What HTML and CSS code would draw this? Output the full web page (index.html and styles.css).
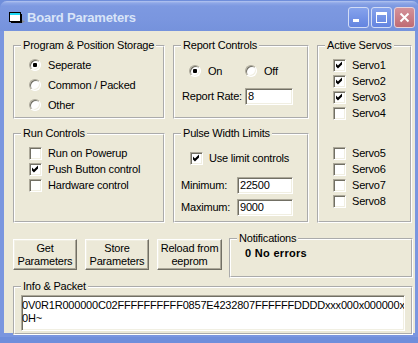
FILE: index.html
```html
<!DOCTYPE html>
<html lang="en">
<head>
  <title>Board Parameters</title>
  <meta charset="UTF-8">
  <meta name="viewport" content="width=device-width, initial-scale=1">
  <link rel="stylesheet" href="styles.css">
</head>
<body>
  <div class="window">
    <div class="titlebar">
      <svg class="app-icon" width="16" height="12" viewBox="0 0 16 12">
        <rect x="2" y="2" width="11" height="9" fill="#000"/>
        <rect x="0.5" y="0.5" width="11" height="9" fill="#fff" stroke="#000"/>
        <rect x="1" y="1" width="10" height="2" fill="#1ed8f5"/>
        <path d="M13 8 L16 9.5 L13 11 Z" fill="#8a8a8a"/>
      </svg>
      <span class="title">Board Parameters</span>
      <div class="caption-buttons">
        <span class="cap-btn"><span class="min-glyph"></span></span>
        <span class="cap-btn"><span class="max-glyph"></span></span>
        <span class="cap-btn cap-close">
          <svg width="11" height="11" viewBox="0 0 11 11">
            <path d="M1.5 1.5 L9.5 9.5 M9.5 1.5 L1.5 9.5" stroke="#fff" stroke-width="2"/>
          </svg>
        </span>
      </div>
    </div>

    <div class="client">
      <div class="top-grid">
        <fieldset class="group storage">
          <legend>Program &amp; Position Storage</legend>
          <div class="body">
            <div class="option"><span class="radio checked"></span>Seperate</div>
            <div class="option"><span class="radio"></span>Common / Packed</div>
            <div class="option"><span class="radio"></span>Other</div>
          </div>
        </fieldset>

        <fieldset class="group report">
          <legend>Report Controls</legend>
          <div class="body">
            <div class="radio-row">
              <div class="option on-option"><span class="radio checked"></span>On</div>
              <div class="option"><span class="radio"></span>Off</div>
            </div>
            <div class="field-row">
              <span class="rate-label">Report Rate:</span>
              <span class="textbox rate-box">8</span>
            </div>
          </div>
        </fieldset>

        <fieldset class="group servos">
          <legend>Active Servos</legend>
          <div class="body">
            <div class="servo-list">
              <div class="check-row"><span class="checkbox checked"></span>Servo1</div>
              <div class="check-row"><span class="checkbox checked"></span>Servo2</div>
              <div class="check-row"><span class="checkbox checked"></span>Servo3</div>
              <div class="check-row"><span class="checkbox"></span>Servo4</div>
            </div>
            <div class="servo-list second">
              <div class="check-row"><span class="checkbox"></span>Servo5</div>
              <div class="check-row"><span class="checkbox"></span>Servo6</div>
              <div class="check-row"><span class="checkbox"></span>Servo7</div>
              <div class="check-row"><span class="checkbox"></span>Servo8</div>
            </div>
          </div>
        </fieldset>

        <fieldset class="group run">
          <legend>Run Controls</legend>
          <div class="body">
            <div class="check-row"><span class="checkbox"></span>Run on Powerup</div>
            <div class="check-row"><span class="checkbox checked"></span>Push Button control</div>
            <div class="check-row"><span class="checkbox"></span>Hardware control</div>
          </div>
        </fieldset>

        <fieldset class="group pulse">
          <legend>Pulse Width Limits</legend>
          <div class="body">
            <div class="check-row limit-row"><span class="checkbox checked"></span>Use limit controls</div>
            <div class="field-row min-row">
              <span class="limit-label">Minimum:</span>
              <span class="textbox limit-box">22500</span>
            </div>
            <div class="field-row max-row">
              <span class="limit-label">Maximum:</span>
              <span class="textbox limit-box">9000</span>
            </div>
          </div>
        </fieldset>
      </div>

      <div class="bottom-row">
        <div class="push-button">Get<br>Parameters</div>
        <div class="push-button">Store<br>Parameters</div>
        <div class="push-button wide">Reload from<br>eeprom</div>
        <fieldset class="group notifications">
          <legend>Notifications</legend>
          <div class="body status">0 No errors</div>
        </fieldset>
      </div>

      <fieldset class="group info">
        <legend>Info &amp; Packet</legend>
        <div class="body">
          <div class="packet">0V0R1R000000C02FFFFFFFFFF0857E4232807FFFFFFDDDDxxx000x000000x<br>0H~</div>
        </div>
      </fieldset>
    </div>
  </div>
</body>
</html>
```

FILE: styles.css
```css
html, body {
  margin: 0;
  padding: 0;
}

body {
  width: 418px;
  height: 343px;
  overflow: hidden;
  background-color: #6f8edb;
  font-family: "Liberation Sans", Arial, sans-serif;
  font-size: 11px;
  line-height: 13px;
  letter-spacing: -0.2px;
  color: #000;
}

.window {
  width: 419px;
  margin-top: 1px;
}

/* title bar (inactive XP look) */
.titlebar {
  height: 30px;
  box-sizing: border-box;
  padding: 3px 4px 0 9px;
  display: flex;
  align-items: center;
  border-radius: 7px 7px 0 0;
  background: linear-gradient(to bottom, #b3c5f0 0, #8ea7e7 2px, #7d99e1 5px, #7a96df 60%, #7592dc 100%);
}

.app-icon {
  flex: none;
  margin-right: 2px;
}

.title {
  font-size: 13px;
  font-weight: bold;
  color: #d8e4f8;
}

.caption-buttons {
  margin-left: auto;
  display: flex;
  gap: 2px;
}

.cap-btn {
  width: 21px;
  height: 21px;
  box-sizing: border-box;
  border: 1px solid #d2dcf5;
  border-radius: 3px;
  background: linear-gradient(to bottom, #86a3ec, #6384e0);
  display: flex;
  align-items: center;
  justify-content: center;
  position: relative;
}

.cap-close {
  border-color: #e8d2d8;
  background: linear-gradient(to bottom, #d4929a, #bf6b74);
}

.min-glyph {
  position: absolute;
  left: 4px;
  top: 11px;
  width: 6px;
  height: 3px;
  background-color: #fff;
}

.max-glyph {
  width: 11px;
  height: 11px;
  box-sizing: border-box;
  border: 1px solid #fff;
  border-top-width: 3px;
}

/* client area */
.client {
  height: 306px;
  box-sizing: border-box;
  padding: 8px 2px 2px 9px;
  background-color: #ece9d8;
  border-left: 4px solid #7a96df;
  border-right: 4px solid #7a96df;
  border-bottom: 4px solid #7a96df;
}

.group {
  margin: 0;
  padding: 0;
  min-width: 0;
  border: 2px groove #fff;
}

.group legend {
  margin-left: 6px;
  padding: 0 2px;
  line-height: 13px;
  white-space: nowrap;
}

.top-grid {
  display: grid;
  grid-template-columns: 152px 136px 95px;
  grid-template-rows: 80px 96px;
  column-gap: 8px;
  row-gap: 8px;
}

.servos {
  grid-row: span 2;
}

/* radios */
.option {
  display: flex;
  align-items: center;
  height: 20px;
}

.radio {
  width: 12px;
  height: 12px;
  box-sizing: border-box;
  margin-right: 7px;
  border: 1px solid;
  border-color: #aca899 #fff #fff #aca899;
  border-radius: 50%;
  background-color: #fff;
  box-shadow: inset 1px 1px 0 #716f64, inset -1px -1px 0 #f1efe2;
  position: relative;
  flex: none;
}

.radio.checked::after {
  content: "";
  position: absolute;
  left: 3px;
  top: 3px;
  width: 4px;
  height: 4px;
  border-radius: 1px;
  background-color: #000;
}

/* checkboxes */
.check-row {
  display: flex;
  align-items: center;
  height: 16px;
}

.checkbox {
  width: 13px;
  height: 13px;
  box-sizing: border-box;
  margin-right: 6px;
  border: 1px solid;
  border-color: #aca899 #fff #fff #aca899;
  background-color: #fff;
  box-shadow: inset 1px 1px 0 #716f64, inset -1px -1px 0 #f1efe2;
  position: relative;
  flex: none;
}

.checkbox.checked::after {
  content: "";
  position: absolute;
  left: 1px;
  top: 1px;
  width: 9px;
  height: 9px;
  background-color: #000;
  clip-path: polygon(11% 33%, 33% 56%, 78% 11%, 78% 44%, 33% 89%, 11% 67%);
}

/* text boxes */
.textbox {
  height: 17px;
  box-sizing: border-box;
  padding: 0 2px;
  border: 1px solid;
  border-color: #aca899 #fff #fff #aca899;
  background-color: #fff;
  box-shadow: inset 1px 1px 0 #716f64, inset -1px -1px 0 #f1efe2;
  display: flex;
  align-items: center;
}

.field-row {
  display: flex;
  align-items: center;
}

/* program storage */
.storage .body {
  padding: 3px 0 0 14px;
}

/* report controls */
.report .body {
  padding-left: 7px;
}

.radio-row {
  display: flex;
  margin-top: 12px;
  padding-left: 7px;
}

.radio-row .option {
  height: 14px;
}

.on-option {
  width: 56px;
}

.report .field-row {
  margin-top: 10px;
}

.rate-label {
  width: 63px;
}

.rate-box {
  width: 48px;
}

/* servos */
.servos .body {
  padding: 5px 0 0 14px;
}

.servo-list.second {
  margin-top: 24px;
}

/* run controls */
.run .body {
  padding: 5px 0 0 14px;
}

/* pulse width */
.pulse .body {
  padding-left: 6px;
}

.limit-row {
  margin-top: 10px;
  padding-left: 9px;
}

.min-row {
  margin-top: 11px;
}

.max-row {
  margin-top: 5px;
}

.limit-label {
  width: 56px;
}

.limit-box {
  width: 56px;
}

/* bottom row */
.bottom-row {
  display: flex;
  align-items: flex-start;
  gap: 8px;
  margin-top: 9px;
}

.push-button {
  width: 64px;
  height: 31px;
  box-sizing: border-box;
  margin-top: 7px;
  border: 1px solid;
  border-color: #fff #716f64 #716f64 #fff;
  box-shadow: inset -1px -1px 0 #aca899, inset 1px 1px 0 #f1efe2;
  background-color: #ece9d8;
  text-align: center;
  display: flex;
  flex-direction: column;
  justify-content: center;
}

.push-button.wide {
  width: 65px;
}

.notifications {
  flex: 1;
  height: 46px;
  box-sizing: border-box;
  margin-left: -1px;
}

.status {
  padding: 2px 0 0 14px;
  font-weight: bold;
  letter-spacing: 0.3px;
}

/* info & packet */
.info {
  height: 55px;
  box-sizing: border-box;
  margin-top: 2px;
}

.info .body {
  padding: 2px 6px 0 6px;
}

.packet {
  height: 36px;
  box-sizing: border-box;
  padding: 3px 0 0 0;
  border: 1px solid;
  border-color: #aca899 #fff #fff #aca899;
  background-color: #fff;
  box-shadow: inset 1px 1px 0 #716f64, inset -1px -1px 0 #f1efe2;
  white-space: nowrap;
  overflow: hidden;
}
```
